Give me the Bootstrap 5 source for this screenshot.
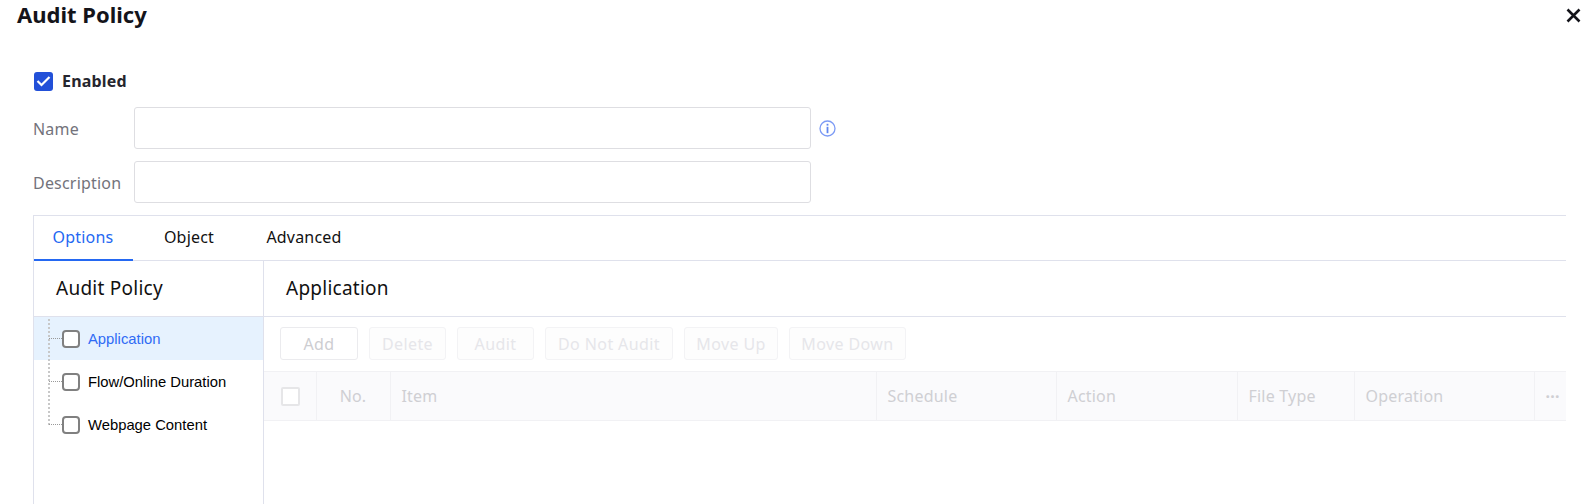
<!DOCTYPE html>
<html lang="en">
<head>
    <meta charset="UTF-8">
    <meta name="viewport" content="width=device-width, initial-scale=1.0">
    <title>Audit Policy</title>
    <link href="https://cdn.jsdelivr.net/npm/bootstrap@5.3.0/dist/css/bootstrap.min.css" rel="stylesheet">
    <style>
        body {
            font-family: "Noto Sans", "Noto Sans CJK SC", sans-serif;
            color: #111;
            background: #fff;
            height: 504px;
            overflow: hidden;
            font-size: 16px;
            letter-spacing: .2px;
        }
        .page-title { padding: 0 5px 0 17px; height: 32px; }
        .page-title h1 { font-size: 22px; font-weight: 700; margin: 0; line-height: 28px; color: #14141a; letter-spacing: 0; }
        .close-x { margin-top: 8px; }
        .policy-form { padding: 31px 20px 0 33px; }
        .enabled-row { height: 36px; gap: 9px; padding-left: 1px; margin-bottom: 8px; }
        .enabled-box { width: 19px; height: 19px; background: #2250d8; border-radius: 3px; }
        .enabled-row span { font-weight: 700; font-size: 16px; color: #26262e; }
        .field-row { height: 42px; margin-bottom: 12px; }
        .field-row label { width: 101px; color: #73737b; font-size: 16px; flex-shrink: 0; padding-top: 1px; }
        .field-box { width: 677px; height: 42px; border: 1px solid #dedee2; border-radius: 3px; }
        .info-icon { margin-left: 8px; }
        .tab-shell { border-top: 1px solid #dfe1ec; border-left: 1px solid #dfe1ec; width: 1533px; height: 300px; }
        .tab-bar { height: 45px; border-bottom: 1px solid #dfe1ec; }
        .tab-item { height: 45px; padding-top: 9px; font-size: 16px; width: 108px; text-align: center; flex-shrink: 0; }
        .tab-item.active-tab { color: #2468f2; border-bottom: 2px solid #2468f2; margin-right: 2px; width: 99px; padding-right: 1px; }
        .tab-item.wide-tab { width: 122px; }
        .pane-wrap { height: 255px; }
        .tree-pane { width: 230px; border-right: 1px solid #dfe1ec; flex-shrink: 0; }
        .pane-head { height: 56px; border-bottom: 1px solid #dfe1ec; font-size: 19px; letter-spacing: .25px; display: flex; align-items: center; padding-left: 22px; }
        .tree-list { position: relative; }
        .tree-list::before { content: ""; position: absolute; z-index: 1; left: 14px; top: 2px; height: 106px; border-left: 2px dotted #c8c8c8; }
        .tree-row { height: 43px; position: relative; font-family: "Liberation Sans", Arial, sans-serif; font-size: 14.8px; letter-spacing: 0; color: #000; padding: 1px 0 0 54px; }
        .tree-row::before { content: ""; position: absolute; z-index: 1; left: 15px; top: 21px; width: 13px; border-top: 1px dotted #999; }
        .tree-row.picked { background: #e6f2fe; color: #2f6bf5; }
        .tree-check { position: absolute; left: 28px; top: 13px; width: 18px; height: 18px; border: 2px solid #808080; border-radius: 4px; background: #fff; }
        .tool-row { height: 54px; padding: 10px 0 0 16px; gap: 11px; letter-spacing: .4px; }
        .tool-btn { height: 33px; border: 1px solid #f3f3f5; border-radius: 3px; color: #e6e6ea; background: #fdfdfd; font-size: 16px; display: flex; align-items: center; justify-content: center; }
        .tool-btn.live-btn { border-color: #ebebee; color: #cdcdd1; background: #fff; }
        .head-table { width: 1302px; table-layout: fixed; border-collapse: collapse; background: #fafafc; }
        .head-table th { height: 49px; padding: 0 0 0 11px; font-weight: 400; color: #cfcfd3; font-size: 16px; border: 1px solid #f1f1f4; border-left: 0; }
        .head-table th.no-cell { padding: 0; }
        .head-table th:last-child { border-right: 0; font-weight: 700; }
        .head-box { display: block; width: 19px; height: 19px; border: 2px solid #e6e6e8; border-radius: 2px; background: #fff; margin-left: 6px; }
    </style>
</head>
<body>
    <div class="page-title d-flex justify-content-between align-items-start">
        <h1>Audit Policy</h1>
        <svg class="close-x" width="15" height="15" viewBox="0 0 15 15"><path d="M1.5 1.5 13.5 13.5M13.5 1.5 1.5 13.5" stroke="#14141a" stroke-width="2.6" fill="none"/></svg>
    </div>

    <div class="policy-form">
        <div class="enabled-row d-flex align-items-center">
            <div class="enabled-box d-flex align-items-center justify-content-center">
                <svg width="15" height="12" viewBox="0 0 15 12"><path d="M1.5 6 5.5 10 13.5 2" stroke="#fff" stroke-width="2.2" fill="none"/></svg>
            </div>
            <span>Enabled</span>
        </div>
        <div class="field-row d-flex align-items-center">
            <label>Name</label>
            <div class="field-box"></div>
            <svg class="info-icon" width="17" height="17" viewBox="0 0 17 17"><circle cx="8.5" cy="8.5" r="7.5" fill="none" stroke="#7d9bf5" stroke-width="1.3"/><rect x="7.6" y="3.8" width="1.8" height="1.8" fill="#5f86f0"/><rect x="7.6" y="6.8" width="1.8" height="6.4" fill="#5f86f0"/></svg>
        </div>
        <div class="field-row d-flex align-items-center">
            <label>Description</label>
            <div class="field-box"></div>
        </div>

        <div class="tab-shell">
            <div class="tab-bar d-flex">
                <div class="tab-item active-tab">Options</div>
                <div class="tab-item">Object</div>
                <div class="tab-item wide-tab">Advanced</div>
            </div>
            <div class="pane-wrap d-flex">
                <div class="tree-pane">
                    <div class="pane-head">Audit Policy</div>
                    <div class="tree-list">
                        <div class="tree-row picked d-flex align-items-center"><i class="tree-check"></i>Application</div>
                        <div class="tree-row d-flex align-items-center"><i class="tree-check"></i>Flow/Online Duration</div>
                        <div class="tree-row d-flex align-items-center"><i class="tree-check"></i>Webpage Content</div>
                    </div>
                </div>
                <div class="main-pane flex-grow-1">
                    <div class="pane-head">Application</div>
                    <div class="tool-row d-flex">
                        <div class="tool-btn live-btn" style="width:78px">Add</div>
                        <div class="tool-btn" style="width:77px">Delete</div>
                        <div class="tool-btn" style="width:77px">Audit</div>
                        <div class="tool-btn" style="width:128px">Do Not Audit</div>
                        <div class="tool-btn" style="width:94px">Move Up</div>
                        <div class="tool-btn" style="width:117px">Move Down</div>
                    </div>
                    <table class="head-table">
                        <colgroup>
                            <col style="width:52px"><col style="width:74px"><col style="width:486px"><col style="width:180px"><col style="width:181px"><col style="width:117px"><col style="width:180px"><col style="width:32px">
                        </colgroup>
                        <tr>
                            <th><i class="head-box"></i></th>
                            <th class="no-cell text-center">No.</th>
                            <th>Item</th>
                            <th>Schedule</th>
                            <th>Action</th>
                            <th>File Type</th>
                            <th>Operation</th>
                            <th>···</th>
                        </tr>
                    </table>
                </div>
            </div>
        </div>
    </div>

    <script src="https://cdn.jsdelivr.net/npm/bootstrap@5.3.0/dist/js/bootstrap.bundle.min.js"></script>
</body>
</html>
